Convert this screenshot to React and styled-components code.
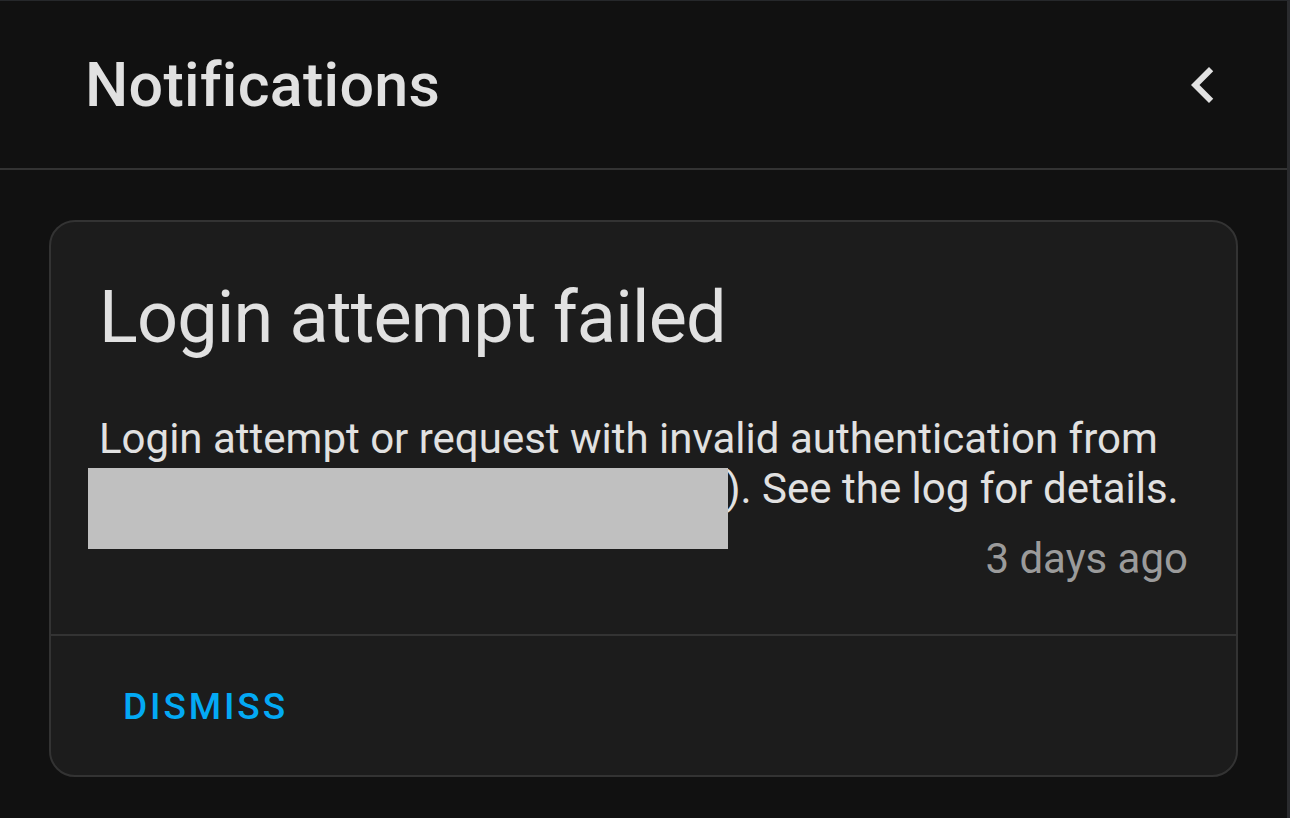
import React from "react";
import styled, { createGlobalStyle } from "styled-components";

const GlobalStyle = createGlobalStyle`
  html, body {
    margin: 0;
    padding: 0;
    background: #111111;
  }
  body {
    font-family: Roboto, "Noto Sans", sans-serif;
    -webkit-font-smoothing: antialiased;
  }
`;

const Drawer = styled.div`
  width: 1290px;
  height: 818px;
  box-sizing: border-box;
  background: #111111;
  border-top: 1px solid #26282b;
  border-right: 3px solid #2a2b2e;
  overflow: hidden;
`;

const Header = styled.div`
  height: 169px;
  box-sizing: border-box;
  display: flex;
  align-items: center;
  justify-content: space-between;
  padding: 0 48px 0 85px;
  border-bottom: 2px solid #333333;
`;

const Title = styled.h1`
  margin: 0;
  font-size: 61px;
  font-weight: 500;
  letter-spacing: 0.3px;
  color: #e1e1e1;
`;

const BackButton = styled.button`
  width: 72px;
  height: 72px;
  padding: 0;
  border: none;
  background: transparent;
  display: flex;
  align-items: center;
  justify-content: center;
  color: #e1e1e1;
  cursor: pointer;
`;

const Content = styled.div`
  padding: 50px 49px 0 49px;
`;

const Card = styled.div`
  background: #1c1c1c;
  border: 2px solid #333333;
  border-radius: 26px;
  overflow: hidden;
`;

const CardBody = styled.div`
  padding: 52px 48px 50px 48px;
`;

const CardTitle = styled.h2`
  margin: 0 0 52px 0;
  font-size: 72px;
  font-weight: 400;
  line-height: 88px;
  letter-spacing: -0.8px;
  color: #e1e1e1;
`;

const Message = styled.p`
  position: relative;
  margin: 0;
  font-size: 42px;
  line-height: 50px;
  color: #e1e1e1;
`;

const Hidden = styled.span`
  display: inline-block;
  width: 627px;
`;

const Redaction = styled.span`
  position: absolute;
  left: -11px;
  top: 54px;
  width: 640px;
  height: 81px;
  background: #c0c0c0;
`;

const Time = styled.div`
  margin-top: 20px;
  text-align: right;
  font-size: 42px;
  line-height: 50px;
  color: #9b9b9b;
`;

const Actions = styled.div`
  border-top: 2px solid #333333;
  padding: 41px 48px 38px 48px;
`;

const ActionButton = styled.button`
  border: none;
  background: transparent;
  padding: 8px 24px;
  font-family: Roboto, "Noto Sans", sans-serif;
  font-size: 37px;
  line-height: 44px;
  font-weight: 500;
  letter-spacing: 2.9px;
  text-transform: uppercase;
  color: #03a9f4;
  cursor: pointer;
`;

export default function App() {
  return (
    <>
      <GlobalStyle />
      <Drawer>
        <Header>
          <Title>Notifications</Title>
          <BackButton aria-label="Close">
            <svg width="72" height="72" viewBox="0 0 24 24" fill="currentColor">
              <path d="M15.41,16.58L10.83,12L15.41,7.41L14,6L8,12L14,18L15.41,16.58Z" />
            </svg>
          </BackButton>
        </Header>
        <Content>
          <Card>
            <CardBody>
              <CardTitle>Login attempt failed</CardTitle>
              <Message>
                Login attempt or request with invalid authentication from{" "}
                <Hidden />). See the log for details.
                <Redaction />
              </Message>
              <Time>3 days ago</Time>
            </CardBody>
            <Actions>
              <ActionButton>Dismiss</ActionButton>
            </Actions>
          </Card>
        </Content>
      </Drawer>
    </>
  );
}
